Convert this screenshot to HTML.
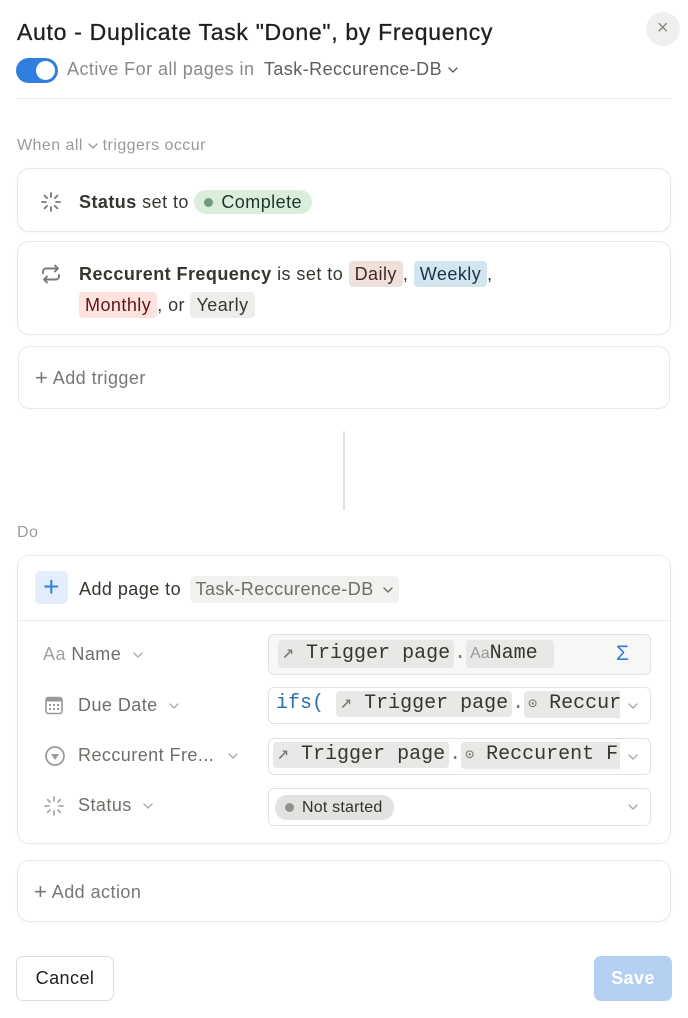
<!DOCTYPE html>
<html><head><meta charset="utf-8"><style>
*{box-sizing:border-box;margin:0;padding:0}
body{width:688px;height:1018px;background:#fff;font-family:"Liberation Sans",sans-serif;color:#37352f;position:relative;overflow:hidden;letter-spacing:.45px}
.a{position:absolute;white-space:nowrap}
.card{position:absolute;border:1px solid #e8e8e6;border-radius:12px;background:#fff;box-shadow:0 1px 2px rgba(0,0,0,.03)}
.tag{display:inline-block;padding:2px 6px;border-radius:4px;line-height:22px}
.mono{font-family:"Liberation Mono",monospace;letter-spacing:0}
.box{position:absolute;left:268px;width:383px;border:1px solid #e3e3e1;border-radius:6px;background:#fff}
.chip{display:inline-block;background:#e8e8e6;border-radius:4px;padding:0 4px;line-height:28px}
.lbl{font-size:18px;color:#6f6e69}
.gray{color:#787774}
.chev{display:inline-block;width:10px;height:10px;vertical-align:middle}
</style></head><body>
<svg width="0" height="0" style="position:absolute"><defs><symbol id="cv" viewBox="0 0 10 10"><path d="M1 3l4 4 4-4" fill="none" stroke="currentColor" stroke-width="1.4" stroke-linecap="round" stroke-linejoin="round"/></symbol></defs></svg>
<div class="a" style="left:17px;top:19px;font-size:23px;color:#1f1f1f;letter-spacing:.7px;-webkit-text-stroke:.3px #1f1f1f">Auto - Duplicate Task "Done", by Frequency</div>
<div class="a" style="left:646px;top:12px;width:34px;height:34px;border-radius:50%;background:#efefee;text-align:center;line-height:33px;font-size:20px;color:#8a8a87">×</div>
<div class="a" style="left:16px;top:58px;width:42px;height:25px;border-radius:13px;background:#2f7fe0"><div style="position:absolute;right:3px;top:3px;width:19px;height:19px;border-radius:50%;background:#fff"></div></div>
<div class="a" style="left:67px;top:59px;font-size:18px;color:#8a8985">Active For all pages in <span style="color:#5f5e5a;margin-left:4px">Task-Reccurence-DB</span> <svg class="chev" style="color:#5f5e5a"><use href="#cv"/></svg></div>
<div class="a" style="left:16px;top:98px;width:656px;height:1px;background:#ebebea"></div>
<div class="a" style="left:17px;top:137px;font-size:16px;color:#9b9a97">When all <svg class="chev" style="color:#9b9a97"><use href="#cv"/></svg> triggers occur</div>

<div class="card" style="left:17px;top:168px;width:654px;height:64px"></div>
<svg class="a" style="left:40px;top:191px" width="22" height="22" viewBox="0 0 22 22" stroke="#777" stroke-width="1.8" stroke-linecap="round"><path d="M11 2v4M11 16v4M2 11h4M16 11h4M4.6 4.6l2.5 2.5M14.9 14.9l2.5 2.5M4.6 17.4l2.5-2.5M14.9 7.1l2.5-2.5"/></svg>
<div class="a" style="left:79px;top:189px;font-size:18px;line-height:26px"><b style="color:#37352f">Status</b> set to <span class="tag" style="background:#dbeddb;border-radius:12px;padding:1px 10px 1px 10px;color:#1c3829"><span style="display:inline-block;width:9px;height:9px;border-radius:50%;background:#6c9b7d;margin-right:8px;vertical-align:1px"></span>Complete</span></div>

<div class="card" style="left:17px;top:241px;width:654px;height:94px"></div>
<svg class="a" style="left:40px;top:263px" width="22" height="22" viewBox="0 0 22 22" fill="none" stroke="#777" stroke-width="1.9" stroke-linecap="round" stroke-linejoin="round"><path d="M3 10V8.5a3 3 0 0 1 3-3h12M15 2.5l3 3-3 3M19 12v1.5a3 3 0 0 1-3 3H4M7 19.5l-3-3 3-3"/></svg>
<div class="a" style="left:79px;top:261px;font-size:18px;line-height:26px"><b>Reccurent Frequency</b> is set to <span class="tag" style="background:#eee0da;color:#442a1e">Daily</span>, <span class="tag" style="background:#d3e5ef;color:#183347">Weekly</span>,</div>
<div class="a" style="left:79px;top:292px;font-size:18px;line-height:26px"><span class="tag" style="background:#ffe2dd;color:#5d1715">Monthly</span>, or <span class="tag" style="background:#ededeb">Yearly</span></div>

<div class="card" style="left:18px;top:346px;width:652px;height:63px"></div>
<div class="a" style="left:35px;top:365px;font-size:18px;color:#787774"><span style="font-size:22px;font-weight:300;vertical-align:-1px">+</span> Add trigger</div>

<div class="a" style="left:343px;top:431px;width:2px;height:79px;background:#e3e3e1"></div>
<div class="a" style="left:17px;top:524px;font-size:16px;color:#9b9a97">Do</div>

<div class="card" style="left:17px;top:555px;width:654px;height:289px"></div>
<div class="a" style="left:18px;top:620px;width:652px;height:1px;background:#ededec"></div>
<div class="a" style="left:35px;top:571px;width:33px;height:33px;border-radius:5px;background:#e3edfb;color:#2f7fe0;text-align:center;font-size:28px;line-height:31px;font-weight:300">+</div>
<div class="a" style="left:79px;top:576px;font-size:18px;line-height:24px">Add page to <span style="display:inline-block;background:#f1f1ef;border-radius:5px;padding:0 6px;color:#6f6e69;margin-left:3px;line-height:27px">Task-Reccurence-DB <svg class="chev" style="margin-left:4px"><use href="#cv"/></svg></span></div>

<div class="a lbl" style="left:43px;top:644px"><span style="color:#a3a29f">Aa</span> Name <svg class="chev" style="margin-left:6px;color:#aaa"><use href="#cv"/></svg></div>
<svg class="a" style="left:45px;top:696px" width="19" height="19" viewBox="0 0 19 19"><rect x="1" y="1.5" width="16" height="16" rx="2.5" fill="none" stroke="#999" stroke-width="1.6"/><rect x="1" y="1.5" width="16" height="4" fill="#999"/><g fill="#999"><rect x="4" y="8" width="2" height="2"/><rect x="8" y="8" width="2" height="2"/><rect x="12" y="8" width="2" height="2"/><rect x="4" y="12" width="2" height="2"/><rect x="8" y="12" width="2" height="2"/><rect x="12" y="12" width="2" height="2"/></g></svg>
<div class="a lbl" style="left:78px;top:695px">Due Date <svg class="chev" style="margin-left:6px;color:#aaa"><use href="#cv"/></svg></div>
<svg class="a" style="left:44px;top:745px" width="22" height="22" viewBox="0 0 22 22"><circle cx="11" cy="11" r="9" fill="none" stroke="#999" stroke-width="1.7"/><path d="M7 9h8l-4 6z" fill="#999"/></svg>
<div class="a lbl" style="left:78px;top:745px">Reccurent Fre... <svg class="chev" style="margin-left:8px;color:#aaa"><use href="#cv"/></svg></div>
<svg class="a" style="left:43px;top:795px" width="22" height="22" viewBox="0 0 22 22" stroke="#aaa" stroke-width="1.8" stroke-linecap="round"><path d="M11 2v4M11 16v4M2 11h4M16 11h4M4.6 4.6l2.5 2.5M14.9 14.9l2.5 2.5M4.6 17.4l2.5-2.5M14.9 7.1l2.5-2.5"/></svg>
<div class="a lbl" style="left:78px;top:795px">Status <svg class="chev" style="margin-left:6px;color:#aaa"><use href="#cv"/></svg></div>

<div class="box" style="top:634px;height:41px;background:#f7f7f5"></div>
<div class="a mono" style="left:278px;top:640px;font-size:20px;color:#37352f"><span class="chip"><span class="gray">↗</span> Trigger page</span><span class="gray">.</span><span class="chip"><span style="font-family:'Liberation Sans';font-size:16px;color:#999">Aa</span>Name&nbsp;</span></div>
<div class="a" style="left:616px;top:642px;font-size:21px;color:#2f7fe0">Σ</div>

<div class="box" style="top:687px;height:37px;overflow:hidden">
<div class="a mono" style="left:7px;top:3px;font-size:20px"><span style="color:#2a6fa8">ifs(</span> <span class="chip" style="line-height:26px"><span class="gray">↗</span> Trigger page</span><span class="gray">.</span><span class="chip" style="line-height:26px"><span style="font-size:15px" class="gray">⊙</span> Reccurent</span></div>
<div class="a" style="right:0;top:0;width:30px;height:37px;background:#fff;color:#aaa;padding:13px 0 0 8px"><svg class="chev" style="vertical-align:top"><use href="#cv"/></svg></div></div>

<div class="box" style="top:738px;height:37px;overflow:hidden">
<div class="a mono" style="left:4px;top:3px;font-size:20px"><span class="chip" style="line-height:26px"><span class="gray">↗</span> Trigger page</span><span class="gray">.</span><span class="chip" style="line-height:26px"><span style="font-size:15px" class="gray">⊙</span> Reccurent Frequency</span></div>
<div class="a" style="right:0;top:0;width:30px;height:37px;background:#fff;color:#aaa;padding:13px 0 0 8px"><svg class="chev" style="vertical-align:top"><use href="#cv"/></svg></div></div>

<div class="box" style="top:788px;height:38px">
<div class="a" style="left:6px;top:6px;background:#e3e2e0;border-radius:12px;padding:0 12px 0 10px;font-size:16px;line-height:25px;color:#32302c;letter-spacing:.2px"><span style="display:inline-block;width:9px;height:9px;border-radius:50%;background:#91918e;margin-right:8px"></span>Not started</div>
<div class="a" style="right:12px;top:13px;color:#aaa"><svg class="chev" style="vertical-align:top"><use href="#cv"/></svg></div></div>

<div class="card" style="left:17px;top:860px;width:654px;height:62px"></div>
<div class="a" style="left:34px;top:879px;font-size:18px;color:#787774"><span style="font-size:22px;font-weight:300;vertical-align:-1px">+</span> Add action</div>

<div class="a" style="left:16px;top:956px;width:98px;height:45px;border:1px solid #dcdcda;border-radius:7px;text-align:center;line-height:43px;font-size:18px;color:#1f1f1f">Cancel</div>
<div class="a" style="left:594px;top:956px;width:78px;height:45px;border-radius:7px;background:#b3d0f3;text-align:center;line-height:45px;font-size:18px;color:#fff;font-weight:bold">Save</div>
</body></html>
